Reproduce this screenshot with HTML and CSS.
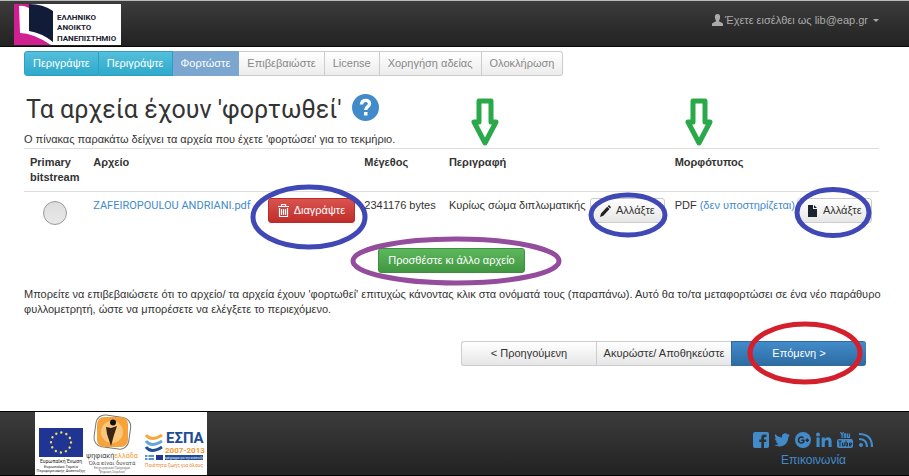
FILE: index.html
```html
<!DOCTYPE html>
<html lang="el">
<head>
	<meta charset="utf-8">
	<title>Τα αρχεία έχουν φορτωθεί</title>
	<link rel="stylesheet" href="styles.css">
</head>
<body>
<header class="navbar">
	<a class="brand" href="#">
		<svg width="107" height="41" viewBox="0 0 107 41" role="img">
			<rect width="107" height="41" fill="#fff"/>
			<path d="M0 0L15 0L15 4Q9 1 5 2L6 29Q19 29 37 41L0 41Z" fill="#cf1f91"/>
			<path d="M15 0Q29 0 39 7L39 38Q28 29 15 27Z" fill="#101c38"/>
			<g class="brand-text">
				<text x="43" y="16">ΕΛΛΗΝΙΚΟ</text>
				<text x="43" y="26">ΑΝΟΙΚΤΟ</text>
				<text x="43" y="37">ΠΑΝΕΠΙΣΤΗΜΙΟ</text>
			</g>
		</svg>
	</a>
	<a class="user" href="#">
		<svg width="11" height="12" viewBox="0 0 11 12"><path d="M5.500 0C7.500 0 8.500 1.500 8 4C7.800 5.500 7.200 6 7 7C7 8 11 8.500 11 10L11 12L0 12L0 10C0 8.500 4 8 4 7C3.800 6 3.200 5.500 3 4C2.500 1.500 3.500 0 5.500 0Z" fill="#aaa"/></svg>
		<span>Έχετε εισέλθει ως lib@eap.gr</span>
		<span class="caret"></span>
	</a>
</header>
<main class="container">
	<div class="steps">
		<button class="step done">Περιγράψτε</button>
		<button class="step done">Περιγράψτε</button>
		<button class="step current">Φορτώστε</button>
		<button class="step" disabled>Επιβεβαιώστε</button>
		<button class="step" disabled>License</button>
		<button class="step" disabled>Χορηγήση αδείας</button>
		<button class="step" disabled>Ολοκλήρωση</button>
	</div>
	<h1>Τα αρχεία έχουν 'φορτωθεί'
		<a class="help" href="#" aria-label="Βοήθεια"><svg width="27" height="27" viewBox="0 0 27 27"><circle cx="13.500" cy="13.500" r="13.500" fill="#428bca"/><path d="M9.500 10.500C9.500 4.800 18 5.300 17.500 10C17.300 12.800 13.700 12.500 13.700 16" fill="none" stroke="#fff" stroke-width="3.400"/><rect x="12" y="18" width="3.500" height="3.500" fill="#fff"/></svg></a>
	</h1>
	<p class="intro">Ο πίνακας παρακάτω δείχνει τα αρχεία που έχετε 'φορτώσει' για το τεκμήριο.</p>
	<table class="files">
		<thead>
			<tr>
				<th class="c-primary">Primary bitstream</th>
				<th class="c-file">Αρχείο</th>
				<th class="c-delete"></th>
				<th class="c-size">Μέγεθος</th>
				<th class="c-desc">Περιγραφή
					<svg class="arrow arrow-desc" width="28" height="48" viewBox="0 0 28 48"><path d="M8 3H20V24H25L14 45L3 24H8Z"/></svg>
				</th>
				<th class="c-edit"></th>
				<th class="c-format">Μορφότυπος
					<svg class="arrow arrow-format" width="28" height="48" viewBox="0 0 28 48"><path d="M8 3H20V24H25L14 45L3 24H8Z"/></svg>
				</th>
				<th class="c-change"></th>
			</tr>
		</thead>
		<tbody>
			<tr>
				<td><input class="primary" type="radio" name="primary" aria-label="Primary bitstream"></td>
				<td><a class="file" href="#">ZAFEIROPOULOU ANDRIANI.pdf</a></td>
				<td>
					<span class="marked">
						<button class="btn danger">
							<svg width="11" height="13" viewBox="0 0 11 13" fill="none" stroke="#fff"><path d="M0 2.500H11M3.500 2V.5H7.500V2M1.500 4V12.500H9.500V4M3.500 5V11M5.500 5V11M7.500 5V11" stroke-width="1.200"/></svg>
							Διαγράψτε</button>
						<svg class="ring ring-delete" width="118" height="66" viewBox="0 0 118 66"><ellipse cx="59" cy="33" rx="56" ry="30"/></svg>
					</span>
				</td>
				<td>2341176 bytes</td>
				<td>Κυρίως σώμα διπλωματικής</td>
				<td>
					<span class="marked">
						<button class="btn">
							<svg width="11" height="12" viewBox="0 0 11 12"><path d="M0 12L1 8.500L7.200 1.800L9.500 4L3.300 10.700ZM7.800 1.200L9 0L11 2.200L10 3.400Z" fill="#222"/></svg>
							Αλλάξτε</button>
						<svg class="ring ring-edit" width="80" height="46" viewBox="0 0 80 46"><ellipse cx="40" cy="23" rx="37" ry="20"/></svg>
					</span>
				</td>
				<td>PDF <a class="support" href="#">(δεν υποστηρίζεται)</a></td>
				<td>
					<span class="marked">
						<button class="btn">
							<svg width="11" height="12" viewBox="0 0 11 12"><path d="M1 0H6V4H10V12H1ZM7 0L10 3H7Z" fill="#1c2430"/></svg>
							Αλλάξτε</button>
						<svg class="ring ring-change" width="78" height="53" viewBox="0 0 78 53"><ellipse cx="39" cy="26.500" rx="36" ry="23"/></svg>
					</span>
				</td>
			</tr>
		</tbody>
	</table>
	<div class="add">
		<span class="marked">
			<button class="btn success">Προσθέστε κι άλλο αρχείο</button>
			<svg class="ring ring-add" width="212" height="50" viewBox="0 0 212 50"><ellipse cx="106" cy="25" rx="103" ry="22"/></svg>
		</span>
	</div>
	<p class="hint">Μπορείτε να επιβεβαιώσετε ότι το αρχείο/ τα αρχεία έχουν 'φορτωθεί' επιτυχώς κάνοντας κλικ στα ονόματά τους (παραπάνω). Αυτό θα το/τα μεταφορτώσει σε ένα νέο παράθυρο φυλλομετρητή, ώστε να μπορέσετε να ελέγξετε το περιεχόμενο.</p>
	<div class="submit">
		<button class="btn prev">&lt; Προηγούμενη</button>
		<button class="btn">Ακυρώστε/ Αποθηκεύστε</button>
		<span class="marked">
			<button class="btn next">Επόμενη &gt;</button>
			<svg class="ring ring-next" width="116" height="64" viewBox="0 0 116 64"><ellipse cx="58" cy="32" rx="55" ry="29"/></svg>
		</span>
	</div>
</main>
<footer class="footer">
	<svg class="sponsors" width="172" height="63" viewBox="0 0 172 63" role="img">
		<rect width="172" height="63" fill="#fff"/>
		<rect x="4" y="16" width="44" height="29" fill="#203494"/>
		<circle cx="26" cy="30.500" r="10" fill="none" stroke="#e9dd55" stroke-width="2.400" stroke-linecap="round" stroke-dasharray=".1 5.136"/>
		<g fill="#222" font-size="5" text-anchor="middle">
			<text x="26" y="51">Ευρωπαϊκή Ένωση</text>
			<text x="26" y="56" font-size="4">Ευρωπαϊκό Ταμείο</text>
			<text x="26" y="60" font-size="4">Περιφερειακής Ανάπτυξης</text>
		</g>
		<rect x="60" y="4" width="35" height="32" rx="9" fill="#fff" stroke="#777" stroke-width="1" transform="rotate(8 77 19)"/>
		<rect x="62" y="5" width="31" height="30" rx="7" fill="#f6a33c"/>
		<circle cx="77" cy="20" r="11" fill="#fac77c"/>
		<circle cx="78" cy="10.500" r="3" fill="#111"/>
		<path d="M71 15L76 16L82 14L79 23L76 34L72 22Z" fill="#3a2416"/>
		<g text-anchor="middle">
			<text x="77" y="46" font-size="7" fill="#444">ψηφιακή<tspan fill="#f29a2e">ελλάδα</tspan></text>
			<text x="77" y="53" font-size="6" fill="#555">Όλα είναι δυνατά</text>
			<text x="77" y="57" font-size="3" fill="#666">Επιχειρησιακό Πρόγραμμα</text>
			<text x="77" y="61" font-size="3" fill="#666">"Ψηφιακή Σύγκλιση"</text>
		</g>
		<path d="M111 23Q116 30 127 23" fill="none" stroke="#f6a93b" stroke-width="3"/>
		<path d="M111 29Q116 36 127 29" fill="none" stroke="#64a6d8" stroke-width="3"/>
		<path d="M111 35Q116 42 127 35" fill="none" stroke="#1f4e96" stroke-width="3"/>
		<text x="131" y="31" font-size="15" font-weight="bold" fill="#204c94">ΕΣΠΑ</text>
		<text x="130" y="41" font-size="8" font-weight="bold" fill="#f29a2e">2007-2013</text>
		<rect x="110" y="43" width="9" height="5" fill="#5794c8"/>
		<path d="M110 45.500H119M113 43V48" stroke="#fff"/>
		<rect x="121" y="43" width="7" height="5" fill="#203494"/>
		<rect x="130" y="43" width="38" height="5" fill="#204c94"/>
		<text x="149" y="47" font-size="3" fill="#fff" text-anchor="middle">πρόγραμμα για την ανάπτυξη</text>
		<text x="139" y="55" font-size="5" fill="#e8842c" text-anchor="middle">Ποιότητα ζωής για όλους</text>
	</svg>
	<div class="contact">
		<div class="social">
			<a href="#" aria-label="Facebook"><svg width="16" height="16" viewBox="0 0 16 16"><path d="M2 0H14Q16 0 16 2V14Q16 16 14 16H11V10H13L13.400 7.500H11V6Q11 5 12.200 5H13.500V2.600H11.500Q8.300 2.600 8.300 5.700V7.500H6.300V10H8.300V16H2Q0 16 0 14V2Q0 0 2 0Z"/></svg></a>
			<a href="#" aria-label="Twitter"><svg width="16" height="16" viewBox="0 0 16 16"><path d="M16 3.500L14.300 5Q14.400 10 10.800 12.800Q6.500 16 0 13Q3 13.200 4.800 11.700Q2.500 11.500 1.800 9.400H3.200Q.8 8.500.7 6.100L2.100 6.500Q0 4.600 1.200 2.100Q4 5.400 8 5.500Q7.500 2.500 10 1.500Q12 .8 13.600 2.400L15.600 1.700L14.300 3.500Z"/></svg></a>
			<a href="#" aria-label="Google Plus"><svg width="16" height="16" viewBox="0 0 16 16"><circle cx="8" cy="8" r="8"/><path d="M8.500 6Q6.500 4 4.300 5.900Q2.700 8 4.300 10.200Q6 11.800 8.200 10.400Q9 9.600 9 8.300H6.300M10.500 8.300H14M12.250 6.500V10" fill="none" stroke="#2b2b2b" stroke-width="1.500"/></svg></a>
			<a href="#" aria-label="LinkedIn"><svg width="16" height="16" viewBox="0 0 16 16"><circle cx="2" cy="2.500" r="2"/><path d="M.5 5.500H3.600V15H.5ZM5.700 5.500H8.800V7Q10 5.200 12 5.300Q15.600 5.400 15.600 9.500V15H12.500V10Q12.500 8 10.900 8Q8.800 8 8.800 10.300V15H5.700Z"/></svg></a>
			<a href="#" aria-label="YouTube"><svg width="16" height="16" viewBox="0 0 16 16"><g fill="none" stroke="#428bca" stroke-width="1.200"><path d="M3.500 0L5 3L6.500 0M5 3V6M10.600 1.500V5.400H12.500V1.500M12.500 5V6"/><rect x="7.300" y="2" width="1.500" height="3.300"/></g><rect x="0" y="7" width="16" height="9" rx="2"/><path d="M1.500 9H4.500M3 9V14.500M5.500 10.500V14H7.300V10.500M9 8.500V14H10.500V11H9M14.500 14H12.500V11H14.500V12.500H12.500" fill="none" stroke="#2b2b2b"/></svg></a>
			<a href="#" aria-label="RSS"><svg width="16" height="16" viewBox="0 0 16 16"><circle cx="3" cy="13" r="2"/><path d="M1 7Q9 7 9 15M1 2Q14 2 14 15" fill="none" stroke="#428bca" stroke-width="2.200"/></svg></a>
		</div>
		<a class="mail" href="#">Επικοινωνία</a>
	</div>
</footer>
</body>
</html>
```
FILE: styles.css
```css
*{
	box-sizing: border-box;
}
body{
	margin: 0;
	background: #fff;
	color: #333;
	font: 11px/15px "Liberation Sans", Arial, sans-serif;
}
a{
	color: #428bca;
	text-decoration: none;
}
svg{
	flex: none;
}
button{
	font: inherit;
	white-space: nowrap;
}
.navbar{
	display: flex;
	justify-content: space-between;
	height: 47px;
	padding: 2px 30px 0 14px;
	border-top: 1px solid #bbb;
	border-bottom: 1px solid #080808;
	background: linear-gradient(#3c3c3c, #222);
}
.brand svg{
	display: block;
	margin-top: 1px;
}
.brand-text{
	font: bold 8px Roboto, sans-serif;
	fill: #223;
}
.user{
	display: flex;
	align-items: center;
	gap: 2px;
	height: 34px;
	color: #aaa;
}
.caret{
	margin-left: 3px;
	border: 3px solid transparent;
	border-top-color: #aaa;
	border-bottom: 0;
}
.container{
	padding: 4px 30px 0 24px;
}
.steps{
	display: flex;
}
.step{
	height: 25px;
	padding: 0 8px;
	border: 1px solid #ccc;
	border-left-width: 0;
	background: linear-gradient(#fff, #ececec);
	color: #888;
}
.step:first-child{
	border-left-width: 1px;
	border-radius: 3px 0 0 3px;
}
.step:last-child{
	border-radius: 0 3px 3px 0;
}
.step.done{
	border-color: #2f9fbf;
	background: linear-gradient(#53bfdc, #2fa9cb);
	color: #fff;
}
.step.current{
	border-color: #7ba6d0;
	background: #7ba6d0;
	color: #fff;
}
h1{
	display: flex;
	align-items: center;
	gap: 10px;
	margin: 17px 0 0 2px;
	font: 25px/34px Roboto, sans-serif;
}
.help svg{
	display: block;
	margin-bottom: 6px;
}
.intro{
	margin: 5px 0 0;
}
.files{
	width: 100%;
	margin-top: 1px;
	border-collapse: separate;
	border-spacing: 0;
	table-layout: fixed;
}
.files th,
.files td{
	height: 43px;
	padding: 6px 0 0 6px;
	border-top: 1px solid #ddd;
	text-align: left;
	vertical-align: top;
	white-space: nowrap;
}
.files th{
	position: relative;
}
.files .c-primary{
	width: 7.4%;
	white-space: normal;
}
.c-file{ width: 20.4%; }
.c-delete{ width: 11.3%; }
.c-size{ width: 9.9%; }
.c-desc{ width: 16.5%; }
.c-edit{ width: 9.9%; }
.c-format{ width: 14.3%; }
.c-change{ width: 10.3%; }
.file{
	font-family: Roboto, sans-serif;
}
.arrow{
	position: absolute;
	top: -51px;
	fill: none;
	stroke: #2ba84a;
	stroke-width: 5;
	stroke-linejoin: round;
}
.arrow-desc{ left: 28px; }
.arrow-format{ left: 16px; }
.primary{
	appearance: none;
	display: block;
	width: 24px;
	height: 24px;
	margin: 3px 0 0 13px;
	border: 1px solid #999;
	border-radius: 50%;
	background: linear-gradient(#ddd, #e8e8e8);
}
.marked{
	display: inline-flex;
	position: relative;
}
.btn{
	display: inline-flex;
	align-items: center;
	justify-content: center;
	gap: 5px;
	height: 25px;
	padding: 0 9px;
	border: 1px solid #ccc;
	border-radius: 3px;
	background: linear-gradient(#fff, #e6e6e6);
	color: #333;
}
.btn.danger{
	border-color: #b92c28;
	background: linear-gradient(#d9534f, #c12e2a);
	color: #fff;
}
.btn.success{
	border-color: #3e8f3e;
	background: linear-gradient(#5cb85c, #419641);
	color: #fff;
}
.btn.next{
	border-color: #2d6ca2;
	background: linear-gradient(#428bca, #2d6ca2);
	color: #fff;
}
.ring{
	position: absolute;
	fill: none;
	stroke: #3f48b5;
	stroke-width: 5;
	pointer-events: none;
}
.ring-delete{ left: -18px; top: -14px; }
.ring-edit{ left: -2px; top: -6px; }
.ring-change{ left: -3px; top: -12px; }
.ring-add{
	left: -28px;
	top: -12px;
	stroke: #944c9c;
}
.ring-next{
	left: 16px;
	top: -20px;
	stroke: #d3202c;
}
.add{
	margin-top: 14px;
	text-align: center;
}
.hint{
	margin: 14px -12px 0 0;
}
.submit{
	display: flex;
	justify-content: flex-end;
	margin: 24px 13px 0 0;
}
.submit .btn{
	min-width: 135px;
	padding: 0 6px;
	border-right-width: 0;
	border-radius: 0;
}
.submit .prev{
	border-radius: 3px 0 0 3px;
}
.submit .next{
	border-radius: 0 3px 3px 0;
}
.footer{
	display: flex;
	justify-content: space-between;
	margin-top: 45px;
	padding: 0 35px;
	border-top: 1px solid #000;
	border-bottom: 1px solid #000;
	background: linear-gradient(#3c3c3c, #222);
}
.sponsors{
	display: block;
	font-family: Roboto, sans-serif;
}
.contact{
	padding-top: 20px;
	text-align: center;
}
.social{
	display: flex;
	gap: 5px;
}
.social svg{
	display: block;
	fill: #428bca;
}
.mail{
	display: block;
	margin-top: 5px;
	font-size: 12px;
}
```
